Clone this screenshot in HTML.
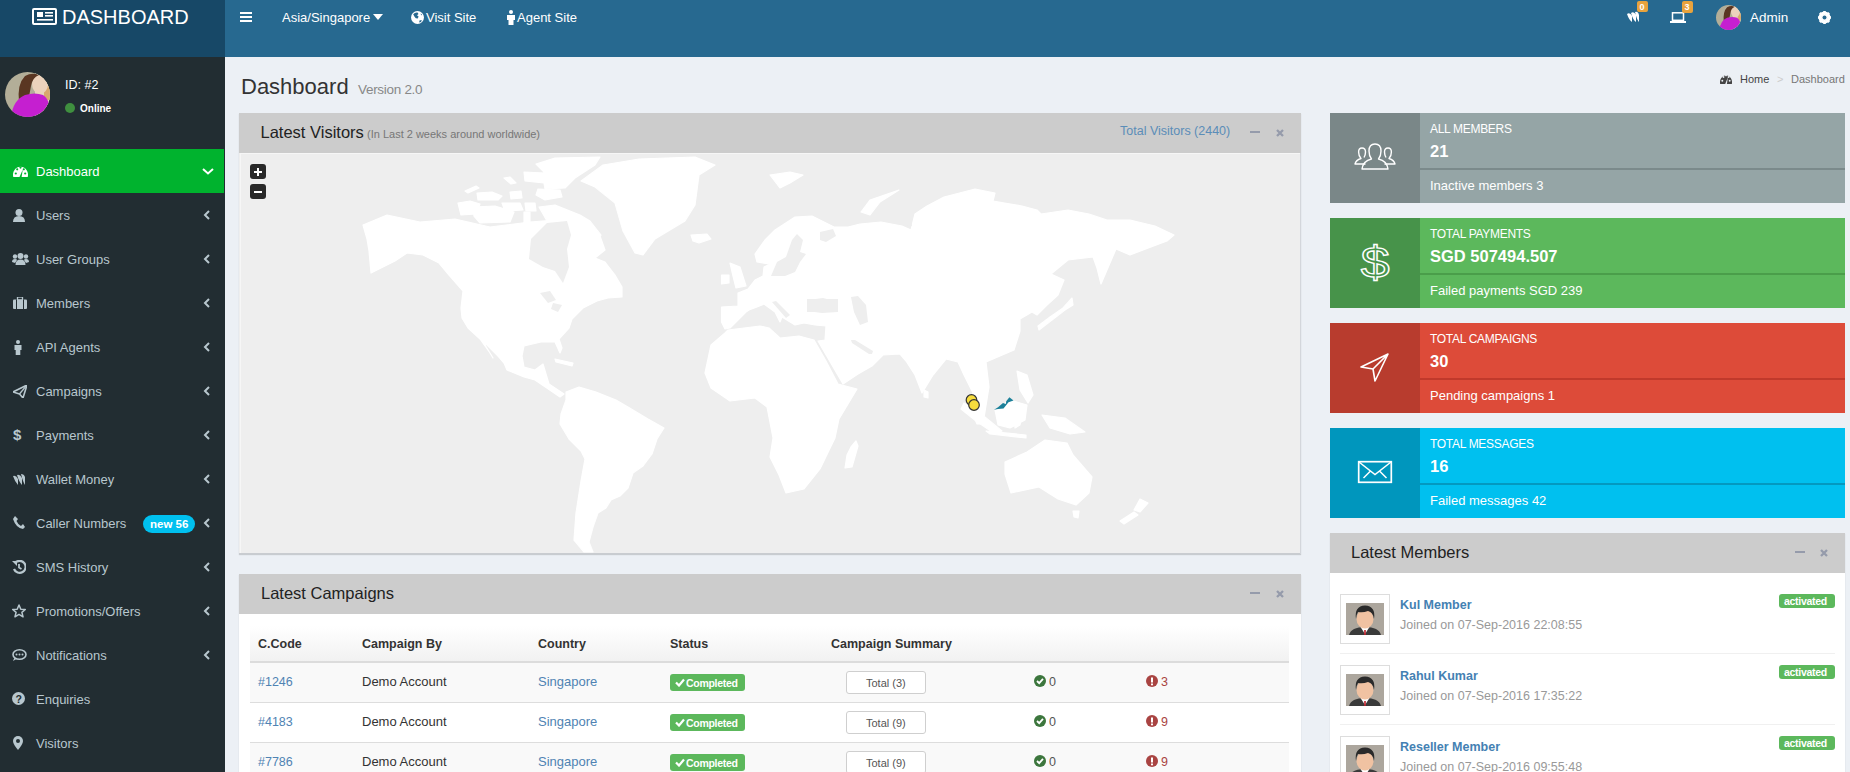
<!DOCTYPE html><html><head><meta charset="utf-8"><style>
*{margin:0;padding:0;box-sizing:border-box}
html,body{width:1850px;height:772px;overflow:hidden}
body{position:relative;background:#ecf0f5;font-family:"Liberation Sans",sans-serif;color:#333}
.a{position:absolute;display:block}
.t{position:absolute;line-height:1;white-space:nowrap}
</style></head><body><div class="a" style="left:0px;top:0px;width:225px;height:57px;background:#174867;"></div>
<div class="a" style="left:225px;top:0px;width:1625px;height:57px;background:#276990;"></div>
<svg class="a" style="left:32px;top:8px;" width="25" height="17" viewBox="0 0 25 17"><rect x="1" y="1" width="23" height="15" rx="1" fill="none" stroke="#fff" stroke-width="2"/><rect x="5" y="4" width="6" height="5" fill="#fff"/><rect x="13" y="4" width="8" height="1.6" fill="#fff"/><rect x="13" y="7" width="8" height="1.6" fill="#fff"/><rect x="5" y="11" width="16" height="1.6" fill="#fff"/></svg>
<div class="t" style="left:62px;top:7.07px;font-size:20px;color:#fff;">DASHBOARD</div>
<div class="a" style="left:240px;top:12px;width:12px;height:2.2px;background:#fff;"></div>
<div class="a" style="left:240px;top:16px;width:12px;height:2.2px;background:#fff;"></div>
<div class="a" style="left:240px;top:20px;width:12px;height:2.2px;background:#fff;"></div>
<div class="t" style="left:282px;top:11.00px;font-size:13px;color:#fff;">Asia/Singapore</div>
<svg class="a" style="left:373px;top:14px;" width="10" height="7" viewBox="0 0 10 7"><path d="M0 0 L10 0 L5 6 Z" fill="#fff"/></svg>
<svg class="a" style="left:411px;top:11px;" width="13" height="13" viewBox="0 0 13 13"><circle cx="6.5" cy="6.5" r="6.5" fill="#fff"/><path d="M2.2 3.2 Q4 1.2 6.5 1.6 L7.5 3 L6 4.2 L7.6 5.6 L6.8 7.6 L4.8 7.2 L3.4 5.6 Z M8.5 9.5 L10.8 9 L10 11 L8.2 11.4Z M9.6 2.4 L11 3.6 L10.2 4.4Z" fill="#276990"/></svg>
<div class="t" style="left:426px;top:11.00px;font-size:13px;color:#fff;">Visit Site</div>
<svg class="a" style="left:506px;top:10px;" width="10" height="15" viewBox="0 0 10 15"><circle cx="5" cy="2" r="2" fill="#fff"/><path d="M1 5 H9 V10 H7.5 V15 H2.5 V10 H1 Z" fill="#fff"/></svg>
<div class="t" style="left:517px;top:11.00px;font-size:13px;color:#fff;">Agent Site</div>
<svg class="a" style="left:1626px;top:10px;" width="14" height="13" viewBox="0 0 14 13"><path d="M1 4 Q4 2 6 6 L6 12 Q3 10 1 4Z M5 3 Q8 1 10 5 L10 12 Q7 10 5 3Z M9 2 Q12 1 13 5 L13 12 Q11 10 9 2Z" fill="#fff"/></svg>
<div class="a" style="left:1637px;top:1px;width:11px;height:11px;background:#e8a33d;border-radius:2px"></div>
<div class="t" style="left:1639.5px;top:2.88px;font-size:9px;color:#fff;font-weight:bold;">0</div>
<svg class="a" style="left:1670px;top:12px;" width="16" height="11" viewBox="0 0 16 11"><rect x="2.5" y="0.8" width="11" height="7.5" fill="none" stroke="#fff" stroke-width="1.5"/><rect x="0" y="9" width="16" height="2" fill="#fff"/></svg>
<div class="a" style="left:1682px;top:1px;width:11px;height:12px;background:#e8a33d;border-radius:2px"></div>
<div class="t" style="left:1684.5px;top:3.38px;font-size:9px;color:#fff;font-weight:bold;">3</div>
<svg class="a" style="left:1716px;top:5px;" width="25" height="25" viewBox="0 0 25 25"><defs><clipPath id="ca"><circle cx="22.5" cy="22.5" r="22.5"/></clipPath></defs><g transform="scale(0.5556)" clip-path="url(#ca)"><rect width="45" height="45" fill="#b3ae98"/><rect x="30" y="0" width="15" height="45" fill="#e3d9bd"/><rect x="39" y="14" width="6" height="14" fill="#d9a86e"/><ellipse cx="35" cy="12" rx="8" ry="10" fill="#ecd2bc"/><path d="M14 30 Q12 12 20 4 Q27 0 34 3 Q27 6 26 14 Q25 22 22 30Z" fill="#5a3622"/><path d="M6 45 Q8 28 20 23 Q30 20 38 23 Q46 28 46 45Z" fill="#c51fd0"/></g></svg>
<div class="t" style="left:1750px;top:10.57px;font-size:13.5px;color:#fff;">Admin</div>
<svg class="a" style="left:1818px;top:11px;" width="13" height="13" viewBox="0 0 13 13"><circle cx="6.5" cy="6.5" r="4.5" fill="none" stroke="#fff" stroke-width="3"/><g stroke="#fff" stroke-width="2.6"><line x1="6.5" y1="0" x2="6.5" y2="13"/><line x1="0" y1="6.5" x2="13" y2="6.5"/><line x1="1.9" y1="1.9" x2="11.1" y2="11.1"/><line x1="11.1" y1="1.9" x2="1.9" y2="11.1"/></g><circle cx="6.5" cy="6.5" r="2" fill="#276990"/></svg>
<div class="a" style="left:0px;top:57px;width:225px;height:715px;background:#222d32;"></div>
<svg class="a" style="left:5px;top:72px;" width="45" height="45" viewBox="0 0 45 45"><defs><clipPath id="cb"><circle cx="22.5" cy="22.5" r="22.5"/></clipPath></defs><g clip-path="url(#cb)"><rect width="45" height="45" fill="#b3ae98"/><rect x="30" y="0" width="15" height="45" fill="#e3d9bd"/><rect x="39" y="14" width="6" height="14" fill="#d9a86e"/><ellipse cx="35" cy="12" rx="8" ry="10" fill="#ecd2bc"/><path d="M14 30 Q12 12 20 4 Q27 0 34 3 Q27 6 26 14 Q25 22 22 30Z" fill="#5a3622"/><path d="M6 45 Q8 28 20 23 Q30 20 38 23 Q46 28 46 45Z" fill="#c51fd0"/></g></svg>
<div class="t" style="left:65px;top:79.12px;font-size:12.5px;color:#fff;">ID: #2</div>
<svg class="a" style="left:65px;top:103px;" width="10" height="10" viewBox="0 0 10 10"><circle cx="5" cy="5" r="5" fill="#3f8f3f"/></svg>
<div class="t" style="left:80px;top:103.53px;font-size:10px;color:#fff;font-weight:bold;">Online</div>
<div class="a" style="left:0px;top:149px;width:224px;height:44px;background:#00b32e;"></div>
<div class="t" style="left:36px;top:165.00px;font-size:13px;color:#fff;">Dashboard</div>
<div class="t" style="left:36px;top:209.00px;font-size:13px;color:#b8c7ce;">Users</div>
<div class="t" style="left:36px;top:253.00px;font-size:13px;color:#b8c7ce;">User Groups</div>
<div class="t" style="left:36px;top:297.00px;font-size:13px;color:#b8c7ce;">Members</div>
<div class="t" style="left:36px;top:341.00px;font-size:13px;color:#b8c7ce;">API Agents</div>
<div class="t" style="left:36px;top:385.00px;font-size:13px;color:#b8c7ce;">Campaigns</div>
<div class="t" style="left:36px;top:429.00px;font-size:13px;color:#b8c7ce;">Payments</div>
<div class="t" style="left:36px;top:473.00px;font-size:13px;color:#b8c7ce;">Wallet Money</div>
<div class="t" style="left:36px;top:517.00px;font-size:13px;color:#b8c7ce;">Caller Numbers</div>
<div class="t" style="left:36px;top:561.00px;font-size:13px;color:#b8c7ce;">SMS History</div>
<div class="t" style="left:36px;top:605.00px;font-size:13px;color:#b8c7ce;">Promotions/Offers</div>
<div class="t" style="left:36px;top:649.00px;font-size:13px;color:#b8c7ce;">Notifications</div>
<div class="t" style="left:36px;top:693.00px;font-size:13px;color:#b8c7ce;">Enquiries</div>
<div class="t" style="left:36px;top:737.00px;font-size:13px;color:#b8c7ce;">Visitors</div>
<svg class="a" style="left:202px;top:168px;" width="12" height="7" viewBox="0 0 12 7"><path d="M1 1 L6 5.5 L11 1" fill="none" stroke="#fff" stroke-width="2"/></svg>
<svg class="a" style="left:203px;top:210px;" width="7" height="10" viewBox="0 0 7 10"><path d="M6 1 L2 5 L6 9" fill="none" stroke="#b8c7ce" stroke-width="2"/></svg>
<svg class="a" style="left:203px;top:254px;" width="7" height="10" viewBox="0 0 7 10"><path d="M6 1 L2 5 L6 9" fill="none" stroke="#b8c7ce" stroke-width="2"/></svg>
<svg class="a" style="left:203px;top:298px;" width="7" height="10" viewBox="0 0 7 10"><path d="M6 1 L2 5 L6 9" fill="none" stroke="#b8c7ce" stroke-width="2"/></svg>
<svg class="a" style="left:203px;top:342px;" width="7" height="10" viewBox="0 0 7 10"><path d="M6 1 L2 5 L6 9" fill="none" stroke="#b8c7ce" stroke-width="2"/></svg>
<svg class="a" style="left:203px;top:386px;" width="7" height="10" viewBox="0 0 7 10"><path d="M6 1 L2 5 L6 9" fill="none" stroke="#b8c7ce" stroke-width="2"/></svg>
<svg class="a" style="left:203px;top:430px;" width="7" height="10" viewBox="0 0 7 10"><path d="M6 1 L2 5 L6 9" fill="none" stroke="#b8c7ce" stroke-width="2"/></svg>
<svg class="a" style="left:203px;top:474px;" width="7" height="10" viewBox="0 0 7 10"><path d="M6 1 L2 5 L6 9" fill="none" stroke="#b8c7ce" stroke-width="2"/></svg>
<svg class="a" style="left:203px;top:518px;" width="7" height="10" viewBox="0 0 7 10"><path d="M6 1 L2 5 L6 9" fill="none" stroke="#b8c7ce" stroke-width="2"/></svg>
<svg class="a" style="left:203px;top:562px;" width="7" height="10" viewBox="0 0 7 10"><path d="M6 1 L2 5 L6 9" fill="none" stroke="#b8c7ce" stroke-width="2"/></svg>
<svg class="a" style="left:203px;top:606px;" width="7" height="10" viewBox="0 0 7 10"><path d="M6 1 L2 5 L6 9" fill="none" stroke="#b8c7ce" stroke-width="2"/></svg>
<svg class="a" style="left:203px;top:650px;" width="7" height="10" viewBox="0 0 7 10"><path d="M6 1 L2 5 L6 9" fill="none" stroke="#b8c7ce" stroke-width="2"/></svg>
<svg class="a" style="left:13px;top:165px;" width="15" height="12" viewBox="0 0 15 12"><path d="M0.3 12 A7.5 8 0 1 1 14.7 12 Z" fill="#fff"/><circle cx="2.8" cy="8.5" r="1.1" fill="#00b32e"/><circle cx="4.2" cy="4.3" r="1.1" fill="#00b32e"/><circle cx="7.5" cy="2.6" r="1.1" fill="#00b32e"/><circle cx="12.2" cy="8.5" r="1.1" fill="#00b32e"/><circle cx="10.8" cy="4.3" r="1.1" fill="#00b32e"/><path d="M6.5 12 L9.8 4.5 L8.6 12Z" fill="#00b32e"/></svg>
<svg class="a" style="left:13px;top:209px;" width="12" height="13" viewBox="0 0 12 13"><circle cx="6" cy="3.5" r="3.5" fill="#b8c7ce"/><path d="M0 13 Q0 7 6 7 Q12 7 12 13Z" fill="#b8c7ce"/></svg>
<svg class="a" style="left:12px;top:253px;" width="17" height="12" viewBox="0 0 17 12"><circle cx="8.5" cy="3" r="3" fill="#b8c7ce"/><circle cx="3" cy="3.5" r="2.2" fill="#b8c7ce"/><circle cx="14" cy="3.5" r="2.2" fill="#b8c7ce"/><path d="M3.5 12 Q3.5 6.5 8.5 6.5 Q13.5 6.5 13.5 12Z" fill="#b8c7ce"/><path d="M0 9 Q0 6 3 6 Q5 6 5 7 L3 10Z M17 9 Q17 6 14 6 Q12 6 12 7 L14 10Z" fill="#b8c7ce"/></svg>
<svg class="a" style="left:13px;top:297px;" width="14" height="12" viewBox="0 0 14 12"><rect x="0" y="2.5" width="14" height="9.5" rx="1" fill="#b8c7ce"/><rect x="4.5" y="0" width="5" height="3" fill="none" stroke="#b8c7ce" stroke-width="1.3"/><rect x="3" y="2.5" width="1" height="9.5" fill="#222d32"/><rect x="10" y="2.5" width="1" height="9.5" fill="#222d32"/></svg>
<svg class="a" style="left:14px;top:340px;" width="8" height="15" viewBox="0 0 8 15"><circle cx="4" cy="2" r="2" fill="#b8c7ce"/><path d="M0.5 5 H7.5 V10 H6.3 V15 H1.7 V10 H0.5Z" fill="#b8c7ce"/></svg>
<svg class="a" style="left:13px;top:385px;" width="14" height="13" viewBox="0 0 14 13"><path d="M0 7 L14 0 L10 13 L6.5 9 Z" fill="none" stroke="#b8c7ce" stroke-width="1.6" stroke-linejoin="round"/><path d="M6.5 9 L14 0" stroke="#b8c7ce" stroke-width="1.4"/></svg>
<svg class="a" style="left:13px;top:427px;" width="9" height="15" viewBox="0 0 9 15"><text x="0" y="13" font-family="Liberation Sans" font-weight="bold" font-size="15" fill="#b8c7ce">$</text></svg>
<svg class="a" style="left:13px;top:473px;" width="13" height="13" viewBox="0 0 13 13"><path d="M0 3 Q3 2 5 6 L5 12 Q2 9 0 3Z M4 2 Q7 1 9 5 L9 12 Q6 9 4 2Z M8 1 Q11 1 12 4 L12 12 Q10 9 8 1Z" fill="#b8c7ce"/></svg>
<svg class="a" style="left:13px;top:516px;" width="12" height="13" viewBox="0 0 12 13"><path d="M2 0 L5 3 L3.5 5 Q5 8.5 8 10 L10 8 L12 11 L10 13 Q3 12 0 3 Z" fill="#b8c7ce"/></svg>
<div class="a" style="left:143px;top:515px;width:52px;height:18px;background:#00c0ef;border-radius:9px"></div>
<div class="t" style="left:150px;top:519.27px;font-size:11.5px;color:#fff;font-weight:bold;">new 56</div>
<svg class="a" style="left:12px;top:560px;" width="14" height="14" viewBox="0 0 14 14"><path d="M3 3 A6 6 0 1 1 2 9" fill="none" stroke="#b8c7ce" stroke-width="2.2"/><path d="M0 1 L5 1 L5 6Z" fill="#b8c7ce"/><path d="M7 4 V7.5 L9.5 9" fill="none" stroke="#b8c7ce" stroke-width="1.8"/></svg>
<svg class="a" style="left:12px;top:604px;" width="14" height="14" viewBox="0 0 14 14"><path d="M7 1 L8.8 5.2 L13.3 5.5 L9.9 8.4 L11 12.8 L7 10.4 L3 12.8 L4.1 8.4 L0.7 5.5 L5.2 5.2Z" fill="none" stroke="#b8c7ce" stroke-width="1.5" stroke-linejoin="round"/></svg>
<svg class="a" style="left:12px;top:649px;" width="15" height="12" viewBox="0 0 15 12"><ellipse cx="7.5" cy="5.5" rx="6.5" ry="4.7" fill="none" stroke="#b8c7ce" stroke-width="1.6"/><path d="M2.5 8.5 L1 12 L5 9.8" fill="#b8c7ce"/><circle cx="4.5" cy="5.5" r="1" fill="#b8c7ce"/><circle cx="7.5" cy="5.5" r="1" fill="#b8c7ce"/><circle cx="10.5" cy="5.5" r="1" fill="#b8c7ce"/></svg>
<svg class="a" style="left:12px;top:692px;" width="13" height="13" viewBox="0 0 13 13"><circle cx="6.5" cy="6.5" r="6.5" fill="#b8c7ce"/><text x="3.6" y="10.8" font-family="Liberation Sans" font-weight="bold" font-size="10.5" fill="#222d32">?</text></svg>
<svg class="a" style="left:13px;top:736px;" width="10" height="14" viewBox="0 0 10 14"><path d="M5 0 A5 5 0 0 1 10 5 Q10 8 5 14 Q0 8 0 5 A5 5 0 0 1 5 0Z" fill="#b8c7ce"/><circle cx="5" cy="5" r="2" fill="#222d32"/></svg>
<div class="t" style="left:241px;top:75.88px;font-size:22px;color:#333;">Dashboard</div>
<div class="t" style="left:358px;top:82.57px;font-size:13.5px;color:#888;letter-spacing:-0.3px;">Version 2.0</div>
<svg class="a" style="left:1720px;top:73px;" width="12" height="11" viewBox="0 0 12 11"><path d="M0.2 11 A6 7 0 1 1 11.8 11 Z" fill="#444"/><circle cx="2.3" cy="7.8" r="0.95" fill="#ecf0f5"/><circle cx="3.5" cy="4" r="0.95" fill="#ecf0f5"/><circle cx="6" cy="2.4" r="0.95" fill="#ecf0f5"/><circle cx="9.7" cy="7.8" r="0.95" fill="#ecf0f5"/><circle cx="8.6" cy="4" r="0.95" fill="#ecf0f5"/><path d="M5.2 11 L7.9 4.2 L6.9 11Z" fill="#ecf0f5"/></svg>
<div class="t" style="left:1740px;top:73.69px;font-size:11px;color:#444;">Home</div>
<div class="t" style="left:1777px;top:73.69px;font-size:11px;color:#ccc;">&gt;</div>
<div class="t" style="left:1791px;top:73.69px;font-size:11px;color:#777;">Dashboard</div>
<div class="a" style="left:239px;top:113px;width:1062px;height:441px;background:#eeeeee;box-shadow:0 1px 1px rgba(0,0,0,0.15)"></div>
<div class="a" style="left:239px;top:113px;width:1062px;height:40px;background:#cccccc;"></div>
<div class="t" style="left:260.5px;top:124.03px;font-size:16.5px;color:#222;">Latest Visitors</div>
<div class="t" style="left:367px;top:128.69px;font-size:11px;color:#777;">(In Last 2 weeks around worldwide)</div>
<div class="t" style="left:1120px;top:124.92px;font-size:12.5px;color:#5b8db8;">Total Visitors (2440)</div>
<svg class="a" style="left:240px;top:153px" width="1060" height="401" viewBox="240 153 1060 401"><polygon points="363,225 387,215 420,222 455,219 490,227 530,222 555,220 575,226 590,230 600,236 605,250 595,258 605,262 615,275 622,287 622,297 608,298 597,301 583,308 572,319 569,328 559,339 562,348 560,353 555,342 541,342 524,346 522,356 524,367 535,370 543,364 549,384 564,394 560,397 535,380 524,377 507,370 504,363 498,356 482,340 493,358 490,353 480,339 468,328 462,318 461,308 463,291 449,275 439,263 423,255 407,253 395,261 371,273 369,251 367,239" fill="#ffffff" stroke="#ffffff" stroke-width="1.2" stroke-linejoin="round"/><polygon points="566,392 579,387 596,392 616,400 628,407 648,419 664,428 657,439 652,454 643,466 633,473 628,488 620,496 611,500 606,508 598,513 593,527 589,542 593,552 584,552 574,540 576,513 581,481 585,459 581,451 569,439 560,424 561,414 566,400" fill="#ffffff" stroke="#ffffff" stroke-width="1.2" stroke-linejoin="round"/><polygon points="581,181 603,165 639,159 695,157 715,165 699,175 695,205 685,221 655,239 643,255 635,253 623,231 615,203 595,187" fill="#ffffff" stroke="#ffffff" stroke-width="1.2" stroke-linejoin="round"/><polygon points="539,207 555,205 565,209 580,215 590,221 601,235 595,249 585,243 567,231 547,221" fill="#ffffff" stroke="#ffffff" stroke-width="1.2" stroke-linejoin="round"/><polygon points="536,164 555,158 600,157 595,165 575,178 565,188 545,189 544,183 525,181 524,172 545,173" fill="#ffffff" stroke="#ffffff" stroke-width="1.2" stroke-linejoin="round"/><polygon points="538,189 560,190 562,197 545,200 536,195" fill="#ffffff" stroke="#ffffff" stroke-width="1.2" stroke-linejoin="round"/><polygon points="510,192 521,191 522,198 511,199" fill="#ffffff" stroke="#ffffff" stroke-width="1.2" stroke-linejoin="round"/><polygon points="477,193 492,192 502,196 498,200 478,200" fill="#ffffff" stroke="#ffffff" stroke-width="1.2" stroke-linejoin="round"/><polygon points="465,191 476,186 479,188 468,193" fill="#ffffff" stroke="#ffffff" stroke-width="1.2" stroke-linejoin="round"/><polygon points="504,178 510,177 516,183 511,184" fill="#ffffff" stroke="#ffffff" stroke-width="1.2" stroke-linejoin="round"/><polygon points="458,203 470,201 480,204 476,214 461,215" fill="#ffffff" stroke="#ffffff" stroke-width="1.2" stroke-linejoin="round"/><polygon points="473,207 495,206 514,212 510,222 480,223 474,216" fill="#ffffff" stroke="#ffffff" stroke-width="1.2" stroke-linejoin="round"/><polygon points="502,203 520,203 523,210 505,211" fill="#ffffff" stroke="#ffffff" stroke-width="1.2" stroke-linejoin="round"/><polygon points="525,203 535,203 536,211 526,211" fill="#ffffff" stroke="#ffffff" stroke-width="1.2" stroke-linejoin="round"/><polygon points="524,212 530,212 530,224 524,224" fill="#ffffff" stroke="#ffffff" stroke-width="1.2" stroke-linejoin="round"/><polygon points="691,235 707,234 711,239 699,243 693,241" fill="#ffffff" stroke="#ffffff" stroke-width="1.2" stroke-linejoin="round"/><polygon points="725,329 721.5,322 721.5,307 738,306 738,293 748,289 755,280 763,276 764,267 770,264 757,262 755,254 765,240 775,230 795,217 812,216 834,227 848,227 860,224 881,222 902,226 911,230 915,214 927,206 944,197 975,189 995,193 993,201 1022,206 1037,210 1041,214 1068,210 1089,214 1107,220 1130,220 1155,226 1174,235 1167,241 1151,247 1130,255 1116,249 1101,284 1097,268 1093,257 1068,260 1051,274 1064,280 1058,295 1047,305 1037,315 1032,312 1020,319 1020,331 1014,350 986,362 989,387 983,424 977,424 967,400 973,393 964,375 958,362 946,359 933,375 922,393 915,375 906,361 900,354 883,355 879,359 872,366 858,374 843,384 818,341 825,340 826,326 815,325 804,323 795,325 782,317 780,322 775,312 764,304 757,307 749,310 746,312 730,328" fill="#ffffff" stroke="#ffffff" stroke-width="1.2" stroke-linejoin="round"/><polygon points="730,263 740,267 746,286 736,288 733,276" fill="#ffffff" stroke="#ffffff" stroke-width="1.2" stroke-linejoin="round"/><polygon points="721.5,275 729,275 729,283 721.5,284" fill="#ffffff" stroke="#ffffff" stroke-width="1.2" stroke-linejoin="round"/><polygon points="770,175 790,172 803,175 790,183 780,188" fill="#ffffff" stroke="#ffffff" stroke-width="1.2" stroke-linejoin="round"/><polygon points="861,212 870,200 899,190 880,202 870,215" fill="#ffffff" stroke="#ffffff" stroke-width="1.2" stroke-linejoin="round"/><polygon points="725,333 728,330 760,326 769,328 780,338 799,336 814,340 826,361 838,384 857,389 839,419 835,438 820,469 804,489 786,493 779,475 770,457 773,438 767,407 755,398 730,401 711,388 705,373 711,345" fill="#ffffff" stroke="#ffffff" stroke-width="1.2" stroke-linejoin="round"/><polygon points="856,441 858,446 852,467 845,468 847,455 851,447" fill="#ffffff" stroke="#ffffff" stroke-width="1.2" stroke-linejoin="round"/><polygon points="924,390 928,392 928,398 924,397" fill="#ffffff" stroke="#ffffff" stroke-width="1.2" stroke-linejoin="round"/><polygon points="1039,330 1052,320 1065,310 1073,305 1072,298 1063,308 1050,317 1038,326" fill="#ffffff" stroke="#ffffff" stroke-width="1.2" stroke-linejoin="round"/><polygon points="964,403 980,413 1002,431 995,434 976,421 961,409" fill="#ffffff" stroke="#ffffff" stroke-width="1.2" stroke-linejoin="round"/><polygon points="995,410 1010,400 1027,405 1025,420 1010,428 998,425" fill="#ffffff" stroke="#ffffff" stroke-width="1.2" stroke-linejoin="round"/><polygon points="986,431 1026,435 1026,438 990,434" fill="#ffffff" stroke="#ffffff" stroke-width="1.2" stroke-linejoin="round"/><polygon points="1014,415 1022,414 1020,425 1015,428" fill="#ffffff" stroke="#ffffff" stroke-width="1.2" stroke-linejoin="round"/><polygon points="1017,371 1027,375 1033,395 1028,403 1020,390" fill="#ffffff" stroke="#ffffff" stroke-width="1.2" stroke-linejoin="round"/><polygon points="1042,415 1065,418 1085,432 1070,434 1050,428" fill="#ffffff" stroke="#ffffff" stroke-width="1.2" stroke-linejoin="round"/><polygon points="1005,462 1027,452 1045,440 1067,443 1073,455 1092,477 1089,493 1076,505 1058,499 1039,487 1011,493 1005,474" fill="#ffffff" stroke="#ffffff" stroke-width="1.2" stroke-linejoin="round"/><polygon points="1073,511 1079,511 1078,518 1074,517" fill="#ffffff" stroke="#ffffff" stroke-width="1.2" stroke-linejoin="round"/><polygon points="1140,499 1148,503 1140,512 1134,510" fill="#ffffff" stroke="#ffffff" stroke-width="1.2" stroke-linejoin="round"/><polygon points="1134,512 1138,515 1124,524 1120,521" fill="#ffffff" stroke="#ffffff" stroke-width="1.2" stroke-linejoin="round"/><polygon points="555,359 573,363 572,366 556,362" fill="#ffffff" stroke="#ffffff" stroke-width="1.2" stroke-linejoin="round"/><polygon points="547,223 567,221 571,235 567,249 569,267 563,283 555,271 543,267 529,259 531,239" fill="#eeeeee"/><polygon points="808,300 823,298 838,302 838,312 822,313 807,311" fill="#eeeeee"/><polygon points="851,297 858,296 866,305 868,322 860,325 854,312" fill="#eeeeee"/><polygon points="771,276 777,262 786,257 792,240 797,234 803,240 800,252 806,254 800,262 795,272 785,276" fill="#eeeeee"/><polygon points="772,302 776,301 790,315 786,318" fill="#eeeeee"/><polygon points="851,340 855,340 873,351 872,354 869,354 852,343" fill="#eeeeee"/><polygon points="807,299 838,299 838,312 807,312" fill="#eeeeee"/><polygon points="820,232 833,229 836,236 826,242 820,240" fill="#eeeeee"/><polygon points="906,214 909,212 912,226 908,227" fill="#eeeeee"/><polygon points="540,293 550,291 556,300 548,303" fill="#eeeeee"/><polygon points="553,303 562,305 558,312 551,309" fill="#eeeeee"/><circle cx="971.5" cy="400" r="5.3" fill="#f6dc3d" stroke="#333" stroke-width="1.2"/><circle cx="974" cy="405" r="5.3" fill="#f6dc3d" stroke="#333" stroke-width="1.2"/><path d="M994 409.7 L998 407.2 L1003 403.1 L1005.8 404 L1006.2 401.3 L1009.4 397.2 L1013.5 400.4 L1008.5 402.2 L1003.5 408.6 L998 409 Z" fill="#1c8099"/></svg>
<div class="a" style="left:239px;top:553px;width:1062px;height:1px;background:#c9ccd0;"></div>
<div class="a" style="left:1300px;top:153px;width:1px;height:401px;background:#d3d6db;"></div>
<div class="a" style="left:240px;top:153px;width:1060px;height:1px;background:#f6f6f6;"></div>
<div class="a" style="left:240px;top:153px;width:1px;height:400px;background:#f6f6f6;"></div>
<div class="a" style="left:250px;top:164px;width:16px;height:15px;background:#292929;border-radius:3px"></div>
<div class="a" style="left:250px;top:184px;width:16px;height:15px;background:#292929;border-radius:3px"></div>
<div class="a" style="left:254px;top:171px;width:8px;height:2px;background:#fff;"></div>
<div class="a" style="left:257px;top:168px;width:2px;height:8px;background:#fff;"></div>
<div class="a" style="left:254px;top:191px;width:8px;height:2px;background:#fff;"></div>
<div class="a" style="left:1250px;top:131px;width:10px;height:2.2px;background:#959bab;"></div>
<svg class="a" style="left:1276px;top:129px;" width="8" height="8" viewBox="0 0 8 8"><path d="M1 1 L7 7 M7 1 L1 7" stroke="#959bab" stroke-width="2.3"/></svg>
<div class="a" style="left:239px;top:574px;width:1062px;height:198px;background:#fff;box-shadow:0 1px 1px rgba(0,0,0,0.15)"></div>
<div class="a" style="left:239px;top:574px;width:1062px;height:40px;background:#cccccc;"></div>
<div class="t" style="left:261px;top:585.03px;font-size:16.5px;color:#222;">Latest Campaigns</div>
<div class="a" style="left:1250px;top:592px;width:10px;height:2.2px;background:#959bab;"></div>
<svg class="a" style="left:1276px;top:590px;" width="8" height="8" viewBox="0 0 8 8"><path d="M1 1 L7 7 M7 1 L1 7" stroke="#959bab" stroke-width="2.3"/></svg>
<div class="a" style="left:250px;top:626px;width:1039px;height:36px;background:linear-gradient(#ffffff,#f1f1f1)"></div>
<div class="a" style="left:250px;top:661px;width:1039px;height:2px;background:#dcdcdc;"></div>
<div class="t" style="left:258px;top:638.42px;font-size:12.5px;color:#333;font-weight:bold;">C.Code</div>
<div class="t" style="left:362px;top:638.42px;font-size:12.5px;color:#333;font-weight:bold;">Campaign By</div>
<div class="t" style="left:538px;top:638.42px;font-size:12.5px;color:#333;font-weight:bold;">Country</div>
<div class="t" style="left:670px;top:638.42px;font-size:12.5px;color:#333;font-weight:bold;">Status</div>
<div class="t" style="left:831px;top:638.42px;font-size:12.5px;color:#333;font-weight:bold;">Campaign Summary</div>
<div class="a" style="left:250px;top:663px;width:1039px;height:39px;background:#f9f9f9;"></div>
<div class="a" style="left:250px;top:702px;width:1039px;height:1px;background:#dddddd;"></div>
<div class="t" style="left:258px;top:676.12px;font-size:12.5px;color:#4f83b3;">#1246</div>
<div class="t" style="left:362px;top:675.00px;font-size:13px;color:#333;">Demo Account</div>
<div class="t" style="left:538px;top:675.00px;font-size:13px;color:#4f83b3;">Singapore</div>
<div class="a" style="left:670px;top:674px;width:75px;height:17px;background:#5cb85c;border-radius:3px"></div>
<svg class="a" style="left:675px;top:678px;" width="10" height="9" viewBox="0 0 10 9"><path d="M1 4.5 L4 7.5 L9 1.5" fill="none" stroke="#fff" stroke-width="2.2"/></svg>
<div class="t" style="left:686px;top:678.11px;font-size:10.5px;color:#fff;font-weight:bold;letter-spacing:-0.3px;">Completed</div>
<div class="a" style="left:846px;top:671px;width:80px;height:23px;border:1px solid #cfcfcf;border-radius:3px;background:#fff"></div>
<div class="t" style="left:866px;top:677.69px;font-size:11px;color:#555;">Total (3)</div>
<svg class="a" style="left:1034px;top:675px;" width="12" height="12" viewBox="0 0 12 12"><circle cx="6" cy="6" r="6" fill="#3c763d"/><path d="M3 6 L5.2 8.2 L9 3.8" fill="none" stroke="#fff" stroke-width="1.8"/></svg>
<div class="t" style="left:1049px;top:675.92px;font-size:12.5px;color:#555;">0</div>
<svg class="a" style="left:1146px;top:675px;" width="12" height="12" viewBox="0 0 12 12"><circle cx="6" cy="6" r="6" fill="#a94442"/><rect x="5" y="2.5" width="2" height="5" fill="#fff"/><rect x="5" y="8.5" width="2" height="1.8" fill="#fff"/></svg>
<div class="t" style="left:1161px;top:675.92px;font-size:12.5px;color:#a94442;">3</div>
<div class="a" style="left:250px;top:742px;width:1039px;height:1px;background:#dddddd;"></div>
<div class="t" style="left:258px;top:716.12px;font-size:12.5px;color:#4f83b3;">#4183</div>
<div class="t" style="left:362px;top:715.00px;font-size:13px;color:#333;">Demo Account</div>
<div class="t" style="left:538px;top:715.00px;font-size:13px;color:#4f83b3;">Singapore</div>
<div class="a" style="left:670px;top:714px;width:75px;height:17px;background:#5cb85c;border-radius:3px"></div>
<svg class="a" style="left:675px;top:718px;" width="10" height="9" viewBox="0 0 10 9"><path d="M1 4.5 L4 7.5 L9 1.5" fill="none" stroke="#fff" stroke-width="2.2"/></svg>
<div class="t" style="left:686px;top:718.11px;font-size:10.5px;color:#fff;font-weight:bold;letter-spacing:-0.3px;">Completed</div>
<div class="a" style="left:846px;top:711px;width:80px;height:23px;border:1px solid #cfcfcf;border-radius:3px;background:#fff"></div>
<div class="t" style="left:866px;top:717.69px;font-size:11px;color:#555;">Total (9)</div>
<svg class="a" style="left:1034px;top:715px;" width="12" height="12" viewBox="0 0 12 12"><circle cx="6" cy="6" r="6" fill="#3c763d"/><path d="M3 6 L5.2 8.2 L9 3.8" fill="none" stroke="#fff" stroke-width="1.8"/></svg>
<div class="t" style="left:1049px;top:715.92px;font-size:12.5px;color:#555;">0</div>
<svg class="a" style="left:1146px;top:715px;" width="12" height="12" viewBox="0 0 12 12"><circle cx="6" cy="6" r="6" fill="#a94442"/><rect x="5" y="2.5" width="2" height="5" fill="#fff"/><rect x="5" y="8.5" width="2" height="1.8" fill="#fff"/></svg>
<div class="t" style="left:1161px;top:715.92px;font-size:12.5px;color:#a94442;">9</div>
<div class="a" style="left:250px;top:743px;width:1039px;height:39px;background:#f9f9f9;"></div>
<div class="a" style="left:250px;top:782px;width:1039px;height:1px;background:#dddddd;"></div>
<div class="t" style="left:258px;top:756.12px;font-size:12.5px;color:#4f83b3;">#7786</div>
<div class="t" style="left:362px;top:755.00px;font-size:13px;color:#333;">Demo Account</div>
<div class="t" style="left:538px;top:755.00px;font-size:13px;color:#4f83b3;">Singapore</div>
<div class="a" style="left:670px;top:754px;width:75px;height:17px;background:#5cb85c;border-radius:3px"></div>
<svg class="a" style="left:675px;top:758px;" width="10" height="9" viewBox="0 0 10 9"><path d="M1 4.5 L4 7.5 L9 1.5" fill="none" stroke="#fff" stroke-width="2.2"/></svg>
<div class="t" style="left:686px;top:758.11px;font-size:10.5px;color:#fff;font-weight:bold;letter-spacing:-0.3px;">Completed</div>
<div class="a" style="left:846px;top:751px;width:80px;height:23px;border:1px solid #cfcfcf;border-radius:3px;background:#fff"></div>
<div class="t" style="left:866px;top:757.69px;font-size:11px;color:#555;">Total (9)</div>
<svg class="a" style="left:1034px;top:755px;" width="12" height="12" viewBox="0 0 12 12"><circle cx="6" cy="6" r="6" fill="#3c763d"/><path d="M3 6 L5.2 8.2 L9 3.8" fill="none" stroke="#fff" stroke-width="1.8"/></svg>
<div class="t" style="left:1049px;top:755.92px;font-size:12.5px;color:#555;">0</div>
<svg class="a" style="left:1146px;top:755px;" width="12" height="12" viewBox="0 0 12 12"><circle cx="6" cy="6" r="6" fill="#a94442"/><rect x="5" y="2.5" width="2" height="5" fill="#fff"/><rect x="5" y="8.5" width="2" height="1.8" fill="#fff"/></svg>
<div class="t" style="left:1161px;top:755.92px;font-size:12.5px;color:#a94442;">9</div>
<div class="a" style="left:1330px;top:113px;width:515px;height:90px;background:#95a5a6;"></div>
<div class="a" style="left:1330px;top:113px;width:90px;height:90px;background:#7a8788;"></div>
<div class="a" style="left:1420px;top:168px;width:425px;height:2px;background:#7b8a8b;"></div>
<div class="t" style="left:1430px;top:123.34px;font-size:12px;color:#fff;letter-spacing:-0.3px;">ALL MEMBERS</div>
<div class="t" style="left:1430px;top:143.03px;font-size:16.5px;color:#fff;font-weight:bold;">21</div>
<div class="t" style="left:1430px;top:179.00px;font-size:13px;color:#fff;">Inactive members 3</div>
<div class="a" style="left:1330px;top:218px;width:515px;height:90px;background:#5cb85c;"></div>
<div class="a" style="left:1330px;top:218px;width:90px;height:90px;background:#47934a;"></div>
<div class="a" style="left:1420px;top:273px;width:425px;height:2px;background:#4a9e4a;"></div>
<div class="t" style="left:1430px;top:228.34px;font-size:12px;color:#fff;letter-spacing:-0.3px;">TOTAL PAYMENTS</div>
<div class="t" style="left:1430px;top:248.03px;font-size:16.5px;color:#fff;font-weight:bold;">SGD 507494.507</div>
<div class="t" style="left:1430px;top:284.00px;font-size:13px;color:#fff;">Failed payments SGD 239</div>
<div class="a" style="left:1330px;top:323px;width:515px;height:90px;background:#dd4b39;"></div>
<div class="a" style="left:1330px;top:323px;width:90px;height:90px;background:#b83c2e;"></div>
<div class="a" style="left:1420px;top:378px;width:425px;height:2px;background:#c0392b;"></div>
<div class="t" style="left:1430px;top:333.34px;font-size:12px;color:#fff;letter-spacing:-0.3px;">TOTAL CAMPAIGNS</div>
<div class="t" style="left:1430px;top:353.03px;font-size:16.5px;color:#fff;font-weight:bold;">30</div>
<div class="t" style="left:1430px;top:389.00px;font-size:13px;color:#fff;">Pending campaigns 1</div>
<div class="a" style="left:1330px;top:428px;width:515px;height:90px;background:#00c0ef;"></div>
<div class="a" style="left:1330px;top:428px;width:90px;height:90px;background:#0096bd;"></div>
<div class="a" style="left:1420px;top:483px;width:425px;height:2px;background:#0399c0;"></div>
<div class="t" style="left:1430px;top:438.34px;font-size:12px;color:#fff;letter-spacing:-0.3px;">TOTAL MESSAGES</div>
<div class="t" style="left:1430px;top:458.03px;font-size:16.5px;color:#fff;font-weight:bold;">16</div>
<div class="t" style="left:1430px;top:494.00px;font-size:13px;color:#fff;">Failed messages 42</div>
<svg class="a" style="left:1330px;top:113px;" width="90" height="90" viewBox="0 0 90 90"><g fill="none" stroke="#fff" stroke-width="1.4" stroke-linejoin="round"><path d="M41.5 46 Q39 43 39 38 Q39 31 45 31 Q51 31 51 38 Q51 43 48.5 46 Q57 48 58 56 L32 56 Q33 48 41.5 46 Z"/><path d="M35.5 51 L25 51 Q26 47 31 45.5 Q28.6 43 28.6 39 Q28.6 35 32 35 Q35.5 35 35.5 39 Q35.5 42 34 44.5"/><path d="M54.5 51 L65 51 Q64 47 59 45.5 Q61.4 43 61.4 39 Q61.4 35 58 35 Q54.5 35 54.5 39 Q54.5 42 56 44.5"/></g></svg>
<svg class="a" style="left:1330px;top:218px;" width="90" height="90" viewBox="0 0 90 90"><text x="0" y="0" transform="translate(45.3,60) scale(1.18,1)" text-anchor="middle" font-family="Liberation Sans" font-size="44" fill="none" stroke="#fff" stroke-width="1.3">$</text></svg>
<svg class="a" style="left:1360px;top:353px;" width="29" height="29" viewBox="0 0 29 29"><path d="M1 14 L28 1 L15 28 L13 16 Z M13 16 L28 1" fill="none" stroke="#fff" stroke-width="1.6" stroke-linejoin="round"/></svg>
<svg class="a" style="left:1330px;top:428px;" width="90" height="90" viewBox="0 0 90 90"><rect x="28.7" y="33.7" width="32.6" height="20.6" fill="none" stroke="#fff" stroke-width="1.7"/><path d="M29 34 L45 46.5 L61 34 M33.5 50 L40 43.5 M56.5 50 L50 43.5" fill="none" stroke="#fff" stroke-width="1.5"/></svg>
<div class="a" style="left:1330px;top:533px;width:515px;height:239px;background:#fff;box-shadow:0 1px 1px rgba(0,0,0,0.15)"></div>
<div class="a" style="left:1330px;top:533px;width:515px;height:40px;background:#cccccc;"></div>
<div class="t" style="left:1351px;top:543.73px;font-size:16.5px;color:#222;">Latest Members</div>
<div class="a" style="left:1795px;top:551px;width:10px;height:2.2px;background:#959bab;"></div>
<svg class="a" style="left:1820px;top:549px;" width="8" height="8" viewBox="0 0 8 8"><path d="M1 1 L7 7 M7 1 L1 7" stroke="#959bab" stroke-width="2.3"/></svg>
<div class="a" style="left:1340px;top:594px;width:50px;height:50px;border:1px solid #ddd;background:#fff"></div>
<svg class="a" style="left:1346px;top:603px;" width="38" height="32" viewBox="0 0 38 32"><rect width="38" height="32" fill="#aca69d"/><path d="M3 32 Q5 24 19 24 Q33 24 35 32Z" fill="#3a3a3a"/><path d="M14.5 24 L19 31 L23.5 24Z" fill="#fff"/><rect x="18.2" y="27" width="1.6" height="5" fill="#c0202a"/><ellipse cx="19" cy="16" rx="8.5" ry="9.5" fill="#f0c2a2"/><path d="M10 16 Q8 3 19 2.5 Q30 3 28 16 Q27 9 22 8 Q17 10 12 9 Q10.5 11 10 16Z" fill="#2a2a2a"/></svg>
<div class="a" style="left:1340px;top:653px;width:495px;height:1px;background:#f0f0f0;"></div>
<div class="t" style="left:1400px;top:599.12px;font-size:12.5px;color:#4481b3;font-weight:bold;">Kul Member</div>
<div class="t" style="left:1400px;top:619.42px;font-size:12.5px;color:#999;">Joined on 07-Sep-2016 22:08:55</div>
<div class="a" style="left:1779px;top:594px;width:56px;height:14px;background:#5cb85c;border-radius:3px"></div>
<div class="t" style="left:1784px;top:596.11px;font-size:10.5px;color:#fff;font-weight:bold;letter-spacing:-0.3px;">activated</div>
<div class="a" style="left:1340px;top:665px;width:50px;height:50px;border:1px solid #ddd;background:#fff"></div>
<svg class="a" style="left:1346px;top:674px;" width="38" height="32" viewBox="0 0 38 32"><rect width="38" height="32" fill="#aca69d"/><path d="M3 32 Q5 24 19 24 Q33 24 35 32Z" fill="#3a3a3a"/><path d="M14.5 24 L19 31 L23.5 24Z" fill="#fff"/><rect x="18.2" y="27" width="1.6" height="5" fill="#c0202a"/><ellipse cx="19" cy="16" rx="8.5" ry="9.5" fill="#f0c2a2"/><path d="M10 16 Q8 3 19 2.5 Q30 3 28 16 Q27 9 22 8 Q17 10 12 9 Q10.5 11 10 16Z" fill="#2a2a2a"/></svg>
<div class="a" style="left:1340px;top:724px;width:495px;height:1px;background:#f0f0f0;"></div>
<div class="t" style="left:1400px;top:670.12px;font-size:12.5px;color:#4481b3;font-weight:bold;">Rahul Kumar</div>
<div class="t" style="left:1400px;top:690.42px;font-size:12.5px;color:#999;">Joined on 07-Sep-2016 17:35:22</div>
<div class="a" style="left:1779px;top:665px;width:56px;height:14px;background:#5cb85c;border-radius:3px"></div>
<div class="t" style="left:1784px;top:667.11px;font-size:10.5px;color:#fff;font-weight:bold;letter-spacing:-0.3px;">activated</div>
<div class="a" style="left:1340px;top:736px;width:50px;height:50px;border:1px solid #ddd;background:#fff"></div>
<svg class="a" style="left:1346px;top:745px;" width="38" height="32" viewBox="0 0 38 32"><rect width="38" height="32" fill="#aca69d"/><path d="M3 32 Q5 24 19 24 Q33 24 35 32Z" fill="#3a3a3a"/><path d="M14.5 24 L19 31 L23.5 24Z" fill="#fff"/><rect x="18.2" y="27" width="1.6" height="5" fill="#c0202a"/><ellipse cx="19" cy="16" rx="8.5" ry="9.5" fill="#f0c2a2"/><path d="M10 16 Q8 3 19 2.5 Q30 3 28 16 Q27 9 22 8 Q17 10 12 9 Q10.5 11 10 16Z" fill="#2a2a2a"/></svg>
<div class="t" style="left:1400px;top:741.12px;font-size:12.5px;color:#4481b3;font-weight:bold;">Reseller Member</div>
<div class="t" style="left:1400px;top:761.42px;font-size:12.5px;color:#999;">Joined on 07-Sep-2016 09:55:48</div>
<div class="a" style="left:1779px;top:736px;width:56px;height:14px;background:#5cb85c;border-radius:3px"></div>
<div class="t" style="left:1784px;top:738.11px;font-size:10.5px;color:#fff;font-weight:bold;letter-spacing:-0.3px;">activated</div></body></html>
